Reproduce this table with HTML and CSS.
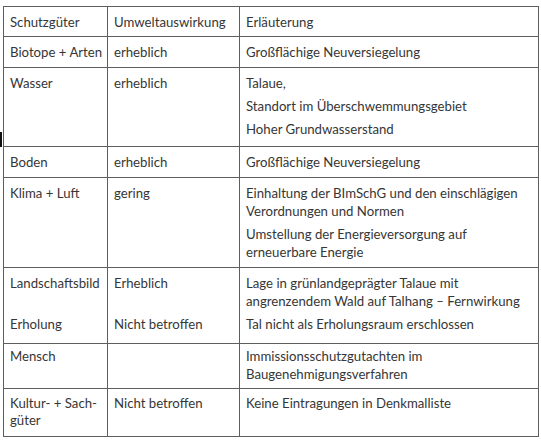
FILE: index.html
```html
<!DOCTYPE html>
<html lang="de">
<head>
<meta charset="utf-8">
<title>Schutzgüter</title>
<link rel="stylesheet" href="styles.css">
</head>
<body>
<div class="cursor"></div>
<table class="grid">
  <colgroup>
    <col class="c1"><col class="c2"><col class="c3">
  </colgroup>
  <tr class="r-head">
    <td>Schutzgüter</td>
    <td>Umweltauswirkung</td>
    <td>Erläuterung</td>
  </tr>
  <tr class="r-one">
    <td>Biotope + Arten</td>
    <td>erheblich</td>
    <td>Großflächige Neuversiegelung</td>
  </tr>
  <tr class="r-wasser">
    <td>Wasser</td>
    <td>erheblich</td>
    <td>
      <p>Talaue,</p>
      <p>Standort im Überschwemmungsgebiet</p>
      <p>Hoher Grundwasserstand</p>
    </td>
  </tr>
  <tr class="r-one">
    <td>Boden</td>
    <td>erheblich</td>
    <td>Großflächige Neuversiegelung</td>
  </tr>
  <tr class="r-klima">
    <td>Klima + Luft</td>
    <td>gering</td>
    <td>
      <p>Einhaltung der BImSchG und den einschlägigen<br>Verordnungen und Normen</p>
      <p>Umstellung der Energieversorgung auf<br>erneuerbare Energie</p>
    </td>
  </tr>
  <tr class="r-land">
    <td>
      <p class="tall">Landschaftsbild</p>
      <p>Erholung</p>
    </td>
    <td>
      <p class="tall">Erheblich</p>
      <p>Nicht betroffen</p>
    </td>
    <td>
      <p>Lage in grünlandgeprägter Talaue mit<br>angrenzendem Wald auf Talhang – Fernwirkung</p>
      <p>Tal nicht als Erholungsraum erschlossen</p>
    </td>
  </tr>
  <tr class="r-mensch">
    <td>Mensch</td>
    <td></td>
    <td>Immissionsschutzgutachten im<br>Baugenehmigungsverfahren</td>
  </tr>
  <tr class="r-kultur">
    <td>Kultur- + Sach-<br>güter</td>
    <td>Nicht betroffen</td>
    <td>Keine Eintragungen in Denkmalliste</td>
  </tr>
</table>
</body>
</html>
```
FILE: styles.css
```css
html, body {
  margin: 0;
  padding: 0;
  background: #ffffff;
}

body {
  position: relative;
  padding: 6px 0 0 3px;
  font-family: "Lato", "DejaVu Sans", sans-serif;
  font-size: 13.2px;
  color: #363636;
}

.cursor {
  position: absolute;
  left: 0;
  top: 132px;
  width: 2px;
  height: 15px;
  background: #111111;
}

.grid {
  border-collapse: collapse;
  table-layout: fixed;
  width: 535px;
}

.c1 { width: 104px; }
.c2 { width: 132px; }
.c3 { width: 299px; }

.grid td {
  border: 1px solid #5e5e5e;
  vertical-align: top;
  padding: 6px 6px 0 6px;
  line-height: 18px;
  white-space: nowrap;
}

.grid p {
  margin: 0 0 5px 0;
}

.grid p:last-child {
  margin-bottom: 0;
}

.grid p.tall {
  min-height: 36px;
}

.r-head { height: 30px; }
.r-one { height: 31px; }
.r-wasser { height: 79px; }
.r-klima { height: 90px; }
.r-land { height: 76px; }
.r-mensch { height: 45px; }
.r-kultur { height: 48px; }

.r-mensch td { padding-top: 3px; }
.r-kultur td { line-height: 17px; padding-top: 6px; }
```
